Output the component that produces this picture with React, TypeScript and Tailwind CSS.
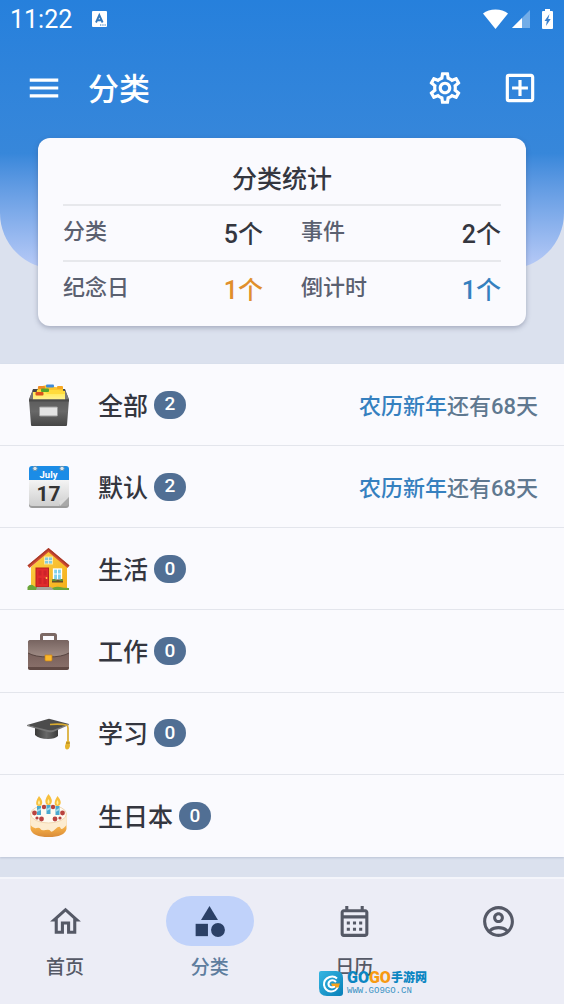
import type { ReactNode } from "react"
import {
  MdCategory,
  MdMenu,
  MdOutlineAccountCircle,
  MdOutlineAddBox,
  MdOutlineCalendarMonth,
  MdOutlineHome,
  MdOutlineSettings,
} from "react-icons/md"
import clsx from "clsx"

interface Category {
  name: string
  count: number
  icon: ReactNode
  next?: { event: string; days: number }
}

function BoxIcon() {
  return (
    <svg viewBox="0 0 44 44" className="size-11">
      <defs>
        <linearGradient id="boxFront" x1="0" y1="0" x2="0" y2="1">
          <stop offset="0" stopColor="#5c5c5c" />
          <stop offset="0.45" stopColor="#686868" />
          <stop offset="1" stopColor="#454545" />
        </linearGradient>
        <linearGradient id="boxPaper" x1="0" y1="0" x2="0" y2="1">
          <stop offset="0" stopColor="#ffe94d" />
          <stop offset="1" stopColor="#fff3a0" />
        </linearGradient>
      </defs>
      <path d="M7 6h32l4 11H3z" fill="#454545" />
      <path d="M12 4l9-2 8 2 8 1v12H10z" fill="#fbc52d" />
      <rect x="20" y="1.5" width="8" height="3" rx="1" fill="#3f8ad8" />
      <rect x="12" y="3" width="7" height="3" rx="1" fill="#f08a24" />
      <rect x="31" y="3" width="6" height="3" rx="1" fill="#f7a823" />
      <path d="M11 7h21l7 1v9H9z" fill="#ffdb3b" />
      <rect x="15" y="5.5" width="8" height="3.5" rx="1" fill="#55a62c" />
      <path d="M6 9h13l2 2h18v7H6z" fill="url(#boxPaper)" />
      <rect x="9.500" y="9" width="8" height="3.5" rx="1" fill="#d9531e" />
      <path d="M3 16l4-9v10zM43 16l-4-9v10z" fill="#777" />
      <path d="M3 16.500h40L41 42q0 1-1 1H6q-1 0-1-1z" fill="url(#boxFront)" />
      <path d="M3 16.500h40v2H3z" fill="#4a4a4a" />
      <rect x="13.500" y="24" width="18" height="9" rx="0.800" fill="#e3e3e3" stroke="#9b9b9b" />
    </svg>
  )
}

function CalendarIcon() {
  return (
    <svg viewBox="0 0 44 44" className="size-11">
      <defs>
        <linearGradient id="calPage" x1="0" y1="0" x2="0" y2="1">
          <stop offset="0" stopColor="#f7f7f7" />
          <stop offset="1" stopColor="#cfcfcf" />
        </linearGradient>
      </defs>
      <rect x="3" y="3" width="40" height="40" rx="3" fill="#9c9c9c" />
      <path d="M3 13h40v19l-9 9H6q-3 0-3-3z" fill="url(#calPage)" />
      <path d="M43 32v6q0 3-3 3h-6l-1-1z" fill="#a9a9a9" />
      <path d="M34 41l-1-5 10-4z" fill="#dcdcdc" />
      <path d="M3 4q0-3 3-3h34q3 0 3 3v11H3z" fill="#1b8ce6" />
      <circle cx="9" cy="3.500" r="2.200" fill="#dbe5ec" stroke="#6393b5" />
      <circle cx="36" cy="3.500" r="2.200" fill="#dbe5ec" stroke="#6393b5" />
      <text x="22.500" y="12.500" textAnchor="middle" fontSize="9.500" fontWeight="700" fill="#fff" fontFamily="Roboto, sans-serif">
        July
      </text>
      <text x="22.500" y="36" textAnchor="middle" fontSize="21" fontWeight="700" fill="#333" fontFamily="Roboto, sans-serif">
        17
      </text>
    </svg>
  )
}

function HouseIcon() {
  return (
    <svg viewBox="0 0 44 44" className="size-11">
      <defs>
        <linearGradient id="houseWall" x1="0" y1="0" x2="1" y2="1">
          <stop offset="0" stopColor="#fcd247" />
          <stop offset="1" stopColor="#f5b01c" />
        </linearGradient>
      </defs>
      <path d="M22.500 4L41 20v21H5V20z" fill="url(#houseWall)" />
      <path d="M22.500 1L1.500 18.500l2 2.500L22.500 5 41.500 21l2-2.500z" fill="#d04a30" />
      <path d="M22.500 1L1.500 18.500l1 1L22.500 3 42.500 19.500l1-1z" fill="#a93a2a" />
      <rect x="18.500" y="10" width="8" height="7" fill="#85cbe0" stroke="#f8e8a0" />
      <path d="M22.500 10v7M18.500 13.500h8" stroke="#f8f4da" strokeWidth="0.800" />
      <rect x="10" y="21" width="12.500" height="19" fill="#e02b2d" stroke="#b5231f" />
      <path d="M12.500 23.500h3v5h-3zM17.500 23.500h3v5h-3zM12.500 31h3v6h-3zM17.500 31h3v6h-3z" fill="#ce2229" />
      <circle cx="20.500" cy="31" r="0.900" fill="#ffd24a" />
      <rect x="27.500" y="22" width="8" height="11" fill="#7fd0ea" stroke="#fff" strokeWidth="1.300" />
      <path d="M31.500 22v11M27.500 27h8" stroke="#fff" />
      <path d="M26 32.500h11v3H26z" fill="#654f2d" />
      <path d="M26 33q2-2 4 0t4 0 3 0v1H26z" fill="#5b9134" />
      <path d="M1.500 43v-3q2-3 5-2l3 2h4v3zM26 43v-2q5-2 8-1t9 1v2z" fill="#6aa63b" />
      <path d="M11 40h14l3 3H10z" fill="#a6a49d" />
    </svg>
  )
}

function BriefcaseIcon() {
  return (
    <svg viewBox="0 0 44 44" className="size-11">
      <defs>
        <linearGradient id="caseBody" x1="0" y1="0" x2="0" y2="1">
          <stop offset="0" stopColor="#6c5450" />
          <stop offset="1" stopColor="#8a716b" />
        </linearGradient>
        <linearGradient id="caseFlap" x1="0" y1="0" x2="0" y2="1">
          <stop offset="0" stopColor="#776460" />
          <stop offset="1" stopColor="#a08c86" />
        </linearGradient>
      </defs>
      <path d="M15.500 12V6.500q0-1 1-1h12q1 0 1 1V12" fill="none" stroke="#7b6864" strokeWidth="3" />
      <rect x="2" y="11" width="41" height="30" rx="2.500" fill="url(#caseBody)" />
      <path d="M2 38h41v1q0 2-2.500 2h-36Q2 41 2 39z" fill="#604944" />
      <path d="M2 13.500q0-2.500 2.500-2.500h36q2.500 0 2.500 2.500V24q-7 4-20.500 4T2 24z" fill="url(#caseFlap)" />
      <path d="M2 24q7 4 20.500 4T43 24" fill="none" stroke="#574440" />
      <path d="M19 26h7v5q0 1-1 1h-5q-1 0-1-1z" fill="#fbb72b" stroke="#c98215" strokeWidth="0.700" />
    </svg>
  )
}

function GraduationIcon() {
  return (
    <svg viewBox="0 0 44 44" className="size-11">
      <defs>
        <linearGradient id="capBase" x1="0" y1="0" x2="1" y2="0">
          <stop offset="0" stopColor="#393939" />
          <stop offset="0.500" stopColor="#686868" />
          <stop offset="1" stopColor="#3b3b3b" />
        </linearGradient>
      </defs>
      <path d="M9 15v9q4 4 13 4 7 0 10-3V14z" fill="url(#capBase)" />
      <path d="M1 14L22 8q1-.3 2 0l19 5-16 7q-2 .5-5 .2z" fill="#4c4c4c" />
      <path d="M1 14l21 5q3 .5 5 0l16-6v1l-16 7q-3 .6-5 0L1 15z" fill="#777" />
      <path d="M24 13.500q10-1 16.500.5 1.500.5 1.500 3V31" fill="none" stroke="#d9ab30" strokeWidth="1.700" />
      <path d="M40.500 30h3l.500 5q-1 3.500-3 3.500T39 35z" fill="#e5b42e" />
      <path d="M40 32h4" stroke="#a67a16" />
    </svg>
  )
}

function CakeIcon() {
  return (
    <svg viewBox="0 0 44 44" className="size-11">
      <defs>
        <linearGradient id="cakeSide" x1="0" y1="0" x2="0" y2="1">
          <stop offset="0" stopColor="#fbd391" />
          <stop offset="0.600" stopColor="#f4ad45" />
          <stop offset="1" stopColor="#d98c3a" />
        </linearGradient>
      </defs>
      <path d="M4.500 20v15q2 8 18 8t18-8V20z" fill="url(#cakeSide)" />
      <path d="M4.500 20v11q3 4 6 3t4 1 5 1 5 1 5-2 5-1 6-3V20z" fill="#fdecd0" />
      <ellipse cx="22.500" cy="20" rx="18" ry="9" fill="#fffaf0" stroke="#f2d8b3" />
      <g fill="#b9433f">
        <circle cx="8.500" cy="19" r="2.400" />
        <circle cx="15.500" cy="25" r="2.400" />
        <circle cx="29" cy="25" r="2.400" />
        <circle cx="36.500" cy="19" r="2.400" />
        <circle cx="18" cy="13" r="2.200" />
        <circle cx="27" cy="13" r="2.200" />
        <circle cx="11" cy="24" r="1.600" />
        <circle cx="34" cy="24" r="1.600" />
      </g>
      <path d="M11 12h4v9h-4zM20.500 11h4v9h-4zM29.500 12h4v9h-4z" fill="#4ba9cf" />
      <path d="M11 16l4-2v2l-4 2zM20.500 15l4-2v2l-4 2zM29.500 16l4-2v2l-4 2z" fill="#a7dbeb" />
      <path d="M13 2q5 6 2.500 9-2.500 2-5 0Q9 8 13 2zM22.500 0q5 6 2.500 10-2.500 2-5 0-2-4 2.500-10zM31.500 2q5 6 2.500 9-2.500 2-5 0-1.500-3 2.500-9z" fill="#f7bf3d" />
      <path d="M13 6q2 3 0 5-2-2 0-5zM22.500 5q2 3 0 5-2-2 0-5zM31.500 6q2 3 0 5-2-2 0-5z" fill="#fff0a3" />
    </svg>
  )
}

const categories: Category[] = [
  { name: "全部", count: 2, icon: <BoxIcon />, next: { event: "农历新年", days: 68 } },
  { name: "默认", count: 2, icon: <CalendarIcon />, next: { event: "农历新年", days: 68 } },
  { name: "生活", count: 0, icon: <HouseIcon /> },
  { name: "工作", count: 0, icon: <BriefcaseIcon /> },
  { name: "学习", count: 0, icon: <GraduationIcon /> },
  { name: "生日本", count: 0, icon: <CakeIcon /> },
]

const stats = [
  [
    { label: "分类", value: 5, color: "text-[#34363f]" },
    { label: "事件", value: 2, color: "text-[#34363f]" },
  ],
  [
    { label: "纪念日", value: 1, color: "text-[#e08f2c]" },
    { label: "倒计时", value: 1, color: "text-[#3580bf]" },
  ],
]

const tabs = [
  { name: "首页", icon: MdOutlineHome },
  { name: "分类", icon: MdCategory, active: true },
  { name: "日历", icon: MdOutlineCalendarMonth },
  { name: "我的", icon: MdOutlineAccountCircle, hideLabel: true },
]

function StatusBar() {
  return (
    <div className="flex h-[38px] items-center justify-between pr-[11px] pl-[10px]">
      <div className="flex items-center gap-5">
        <span className="pt-px text-[25px]">11:22</span>
        <svg viewBox="0 0 15 16" className="h-4 w-[15px]">
          <rect width="15" height="16" rx="1" fill="#fff" />
          <path d="M4 11.500L7.300 4l3.300 7.500M5 9.300h4.600" fill="none" stroke="#3478bb" strokeWidth="1.900" />
          <path d="M8 14h1.300M10.300 14h1.300M12.500 14h1.300" stroke="#3478bb" strokeWidth="1.200" />
        </svg>
      </div>
      <div className="flex items-center">
        <svg viewBox="0 0 25 20" className="h-5 w-[25px]">
          <path d="M0 4.500Q5 .500 12.500.500T25 4.500L12.500 20z" fill="#fff" />
        </svg>
        <svg viewBox="0 0 18 18" className="ml-1 h-[18px] w-[18px]">
          <path d="M18 0v18H0z" fill="#fff" fillOpacity="0.350" />
          <path d="M10 8v10H0z" fill="#fff" />
        </svg>
        <svg viewBox="0 0 11 20" className="ml-3 h-5 w-[11px]">
          <path d="M3 0h5v2h2q1 0 1 1v16q0 1-1 1H1q-1 0-1-1V3q0-1 1-1h2z" fill="#fff" />
          <path d="M7.500 5L2.500 12h2.300L4 17l4.700-7H6.200z" fill="#3b80cc" />
        </svg>
      </div>
    </div>
  )
}

function StatsCard() {
  return (
    <section className="relative mx-[38px] -mt-[131px] rounded-xl bg-[#fafafe] px-[25px] pt-[22px] pb-[10px] shadow-[0_2px_5px_rgba(60,70,100,0.35)]">
      <h2 className="pb-1 text-center text-[25px] leading-10 font-medium text-[#34363f]">分类统计</h2>
      {stats.map((row) => (
        <dl key={row[0].label} className="flex h-14 items-center gap-[38px] border-t-2 border-[#e7e8ec]">
          {row.map((stat) => (
            <div key={stat.label} className="flex flex-1 items-center justify-between">
              <dt className="pb-1 text-[22px] font-medium text-[#5a6070]">{stat.label}</dt>
              <dd className={clsx("pt-1 text-[25px] font-medium", stat.color)}>{stat.value}个</dd>
            </div>
          ))}
        </dl>
      ))}
    </section>
  )
}

function CategoryRow({ category }: { category: Category }) {
  return (
    <li className="border-b border-[#e3e5ec] last:border-b-0">
      <a href="#" className="flex h-full min-h-16 items-center px-[26px]">
        {category.icon}
        <span className="ml-7 pt-1 text-[25px] font-medium text-[#34363f]">{category.name}</span>
        <span className="ml-[6px] flex h-7 w-8 items-center justify-center rounded-full bg-[#516f94] text-[19px] font-medium text-white">
          {category.count}
        </span>
        {category.next && (
          <span className="ml-auto pt-1 text-[22px] font-medium text-[#5f7890]">
            <span className="text-[#3580bf]">{category.next.event}</span>还有{category.next.days}天
          </span>
        )}
      </a>
    </li>
  )
}

function Watermark() {
  return (
    <div className="pointer-events-none absolute bottom-2 left-[319px] flex items-center gap-1">
      <svg viewBox="0 0 24 25" className="h-[25px] w-6">
        <defs>
          <linearGradient id="markBlue" x1="0" y1="0" x2="1" y2="1">
            <stop offset="0" stopColor="#35b6e2" />
            <stop offset="1" stopColor="#087fb8" />
          </linearGradient>
        </defs>
        <path d="M2 0h15q7 0 7 7v15q0 3-3 3H8q-8 0-8-8V2q0-2 2-2z" fill="url(#markBlue)" />
        <path d="M18 7.500Q15 4.500 10.500 6 4.500 8.500 5 14q1 6 7 6.500 5 0 7-5" fill="none" stroke="#fff" strokeWidth="2" />
        <path d="M17 11q-3-3-6-1-2.500 2-1 5 3 3 7-.5" fill="none" stroke="#fff" strokeWidth="2" />
        <path d="M12 12.500h9l-1.500 4H16v-1.500h-3z" fill="#f7a21b" />
      </svg>
      <div>
        <div className="flex items-center text-[12px] leading-4 font-black text-[#0b86c2]">
          <span className="text-base leading-4 font-black">
            GO<span className="text-[#f79a12]">GO</span>
          </span>
          手游网
        </div>
        <div className="font-['Liberation_Mono',monospace] text-[9px] leading-[10px] text-[#3a93c4]">WWW.GO9GO.CN</div>
      </div>
    </div>
  )
}

function BottomNav() {
  return (
    <nav className="relative flex h-[127px] items-start justify-between border-t-2 border-[#f4f5fb] bg-[#ecedf6] px-[21px] pt-[17px]">
      {tabs.map((tab) => (
        <button
          key={tab.name}
          type="button"
          aria-label={tab.name}
          className={clsx(
            "flex flex-col items-center gap-2 text-[19px] leading-7 font-medium",
            tab.active ? "text-[#5e7d9e]" : "text-[#555966]",
          )}
        >
          <span
            className={clsx(
              "flex h-[50px] w-[88px] items-center justify-center rounded-full",
              tab.active && "bg-[#c0d2fa] text-[#2b4066]",
            )}
          >
            <tab.icon className="size-[37px]" />
          </span>
          {!tab.hideLabel && <span>{tab.name}</span>}
        </button>
      ))}
      <Watermark />
    </nav>
  )
}

export default function App() {
  return (
    <div className="flex min-h-screen flex-col bg-[#dbe1ee] font-['Roboto','Noto_Sans_CJK_SC',sans-serif]">
      <header className="rounded-b-[56px] bg-linear-to-b from-[#2680dc] via-[#3787da] via-[57%] to-[#b9cbf7] pb-[131px] text-white">
        <StatusBar />
        <div className="flex h-[100px] items-center px-[25px]">
          <button type="button" aria-label="菜单">
            <MdMenu className="size-[38px]" />
          </button>
          <h1 className="ml-[25px] pt-1 text-[31px] font-medium">分类</h1>
          <div className="ml-auto flex gap-[37px]">
            <button type="button" aria-label="设置">
              <MdOutlineSettings className="size-[38px]" />
            </button>
            <button type="button" aria-label="添加">
              <MdOutlineAddBox className="size-[38px]" />
            </button>
          </div>
        </div>
      </header>

      <StatsCard />

      <ul className="mt-[38px] mb-5 grid flex-1 auto-rows-fr bg-[#fafafe] shadow-[0_1px_2px_rgba(60,80,110,0.2)]">
        {categories.map((category) => (
          <CategoryRow key={category.name} category={category} />
        ))}
      </ul>

      <BottomNav />
    </div>
  )
}
